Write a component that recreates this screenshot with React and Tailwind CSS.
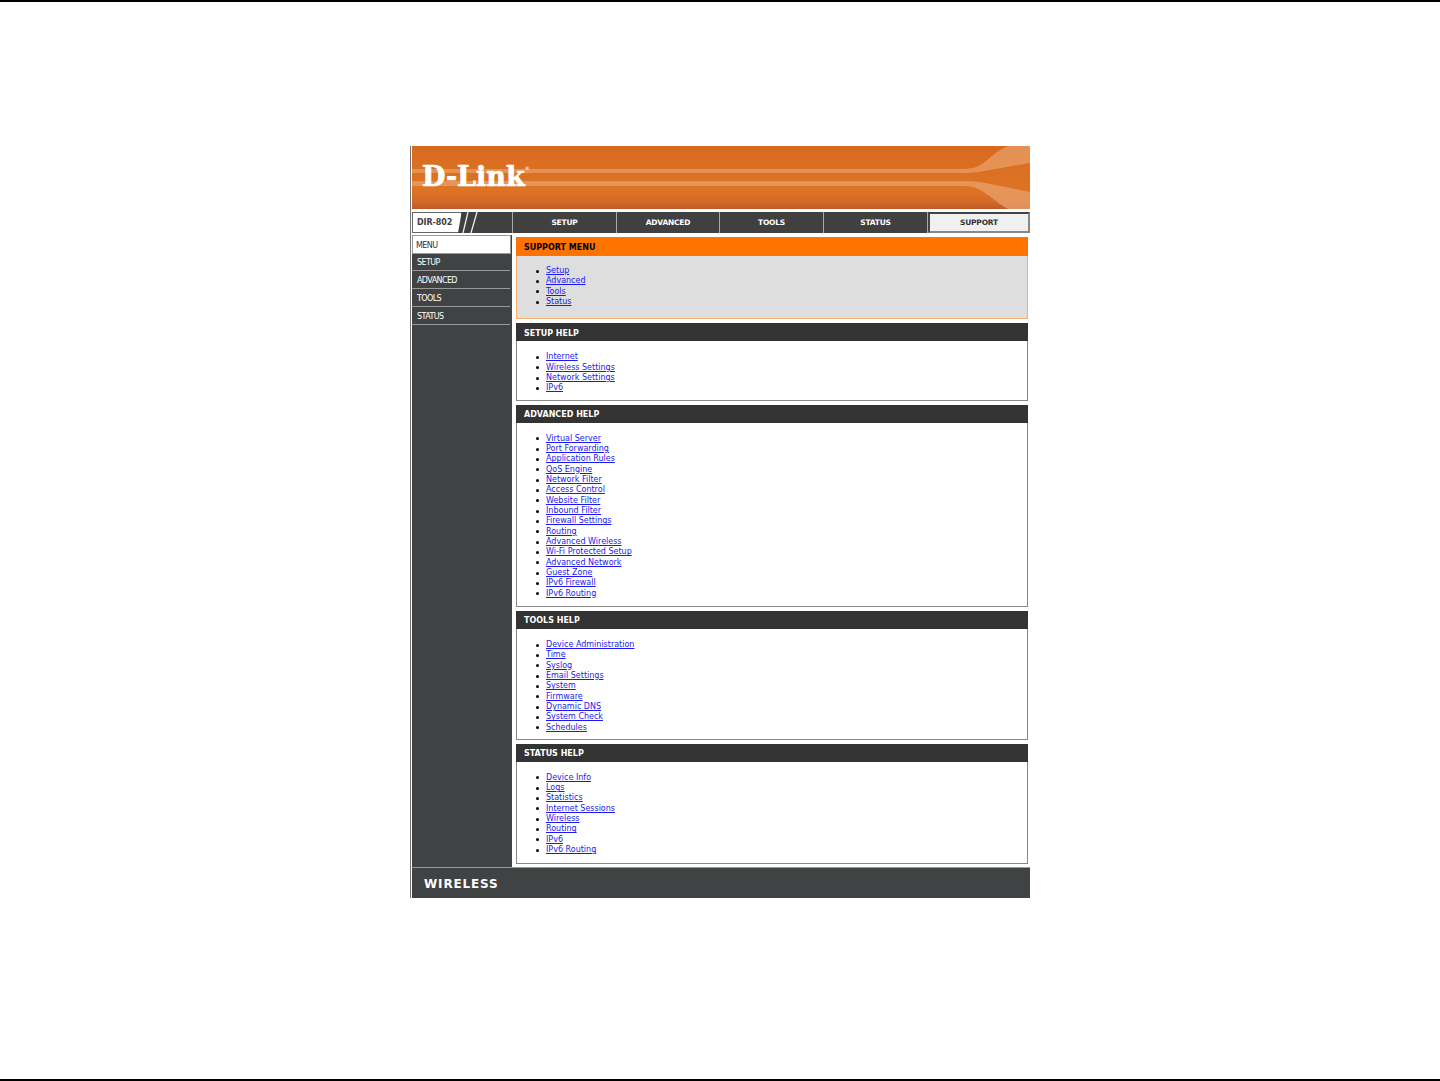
import React from "react";

const FONT = "font-['DejaVu_Sans',sans-serif]";

const sections = [
  {
    title: "SETUP HELP",
    pad: "pb-[6px]",
    links: ["Internet", "Wireless Settings", "Network Settings", "IPv6"],
  },
  {
    title: "ADVANCED HELP",
    pad: "pb-[7px]",
    links: [
      "Virtual Server",
      "Port Forwarding",
      "Application Rules",
      "QoS Engine",
      "Network Filter",
      "Access Control",
      "Website Filter",
      "Inbound Filter",
      "Firewall Settings",
      "Routing",
      "Advanced Wireless",
      "Wi-Fi Protected Setup",
      "Advanced Network",
      "Guest Zone",
      "IPv6 Firewall",
      "IPv6 Routing",
    ],
  },
  {
    title: "TOOLS HELP",
    pad: "pb-[6px]",
    links: [
      "Device Administration",
      "Time",
      "Syslog",
      "Email Settings",
      "System",
      "Firmware",
      "Dynamic DNS",
      "System Check",
      "Schedules",
    ],
  },
  {
    title: "STATUS HELP",
    pad: "pb-2",
    links: [
      "Device Info",
      "Logs",
      "Statistics",
      "Internet Sessions",
      "Wireless",
      "Routing",
      "IPv6",
      "IPv6 Routing",
    ],
  },
];

const BannerArt = () => (
  <svg className="absolute inset-0 h-full w-full" viewBox="0 0 618 63" preserveAspectRatio="none">
    <defs>
      <linearGradient id="bannerBg" x1="0" y1="0" x2="0" y2="1">
        <stop offset="0" stopColor="#d86a20" />
        <stop offset="0.7" stopColor="#dd7423" />
        <stop offset="0.88" stopColor="#d36a26" />
        <stop offset="1" stopColor="#bd5a2a" />
      </linearGradient>
    </defs>
    <rect width="618" height="63" fill="url(#bannerBg)" />
    <path d="M0 23H552C562 23 568 20 574 15C582 8 588 3 596 0H618V17L575 24.5C570 25.5 562 27 552 27H0Z" fill="#e9a16c" opacity="0.7" />
    <path d="M0 35H552C562 35 570 36 578 38L618 46V63H596C590 60 584 55 576 49C568 43 562 40 552 40H0Z" fill="#e9a16c" opacity="0.75" />
  </svg>
);

const NavCell = ({ label, width }) => (
  <div className={`flex h-full items-center justify-center border-r border-[#aaa] text-[7.5px] font-bold tracking-[-0.2px] text-white ${width}`}>
    {label}
  </div>
);

const SideItem = ({ label, height }) => (
  <div className={`mr-[2px] flex items-center border-b border-[#999] pt-[2px] pl-[5px] text-[8px] tracking-[-0.6px] text-white ${height}`}>
    {label}
  </div>
);

const LinkList = ({ links }) => (
  <ul className="pl-[19px] text-[8px] leading-[10.33px]">
    {links.map((l) => (
      <li key={l} className="flex items-center">
        <span className="mr-[7px] h-[3px] w-[3px] rounded-full bg-black" />
        <a href="#" className="text-[#1a1af0] underline">
          {l}
        </a>
      </li>
    ))}
  </ul>
);

const HelpBox = ({ title, links, pad }) => (
  <section className={`border-x border-b border-[#888] bg-white ${pad}`}>
    <h2 className="-mx-px mb-[11px] flex h-[18px] items-center bg-[#333] pt-[3px] pl-2 text-[8px] font-bold text-white">
      {title}
    </h2>
    <LinkList links={links} />
  </section>
);

export default function App() {
  return (
    <div className={`flex min-h-[1081px] flex-col justify-between bg-white ${FONT}`}>
      <div className="border-t-2 border-black pt-[144px] pl-[410px]">
        <div className="w-[620px] border-l border-[#777] pl-px">
          {/* banner */}
          <div className="relative flex h-[63px] items-center overflow-hidden">
            <BannerArt />
            <span className="relative -mt-[2px] ml-[10px] font-['DejaVu_Serif',serif] text-[27px] leading-none font-bold text-white [-webkit-text-stroke:0.7px_white]">
              D-Link
            </span>
            <span className="relative -mt-[18px] text-[5px] text-white">®</span>
          </div>

          {/* nav */}
          <div className="mt-[3px] flex h-[21px] bg-[#404040]">
            <div className="relative flex w-[101px] items-stretch overflow-hidden border-r border-[#aaa]">
              <div className="flex w-[50px] items-center border border-[#666] bg-white pt-px pl-[4px] text-[8px] font-bold tracking-[-0.1px] text-[#404040]">
                DIR-802
              </div>
              <svg className="absolute top-0 left-[46px] h-[21px] w-[24px]" viewBox="0 0 24 21">
                <path d="M3.7 0L0 21H8V0Z" fill="#404040" />
                <path d="M5 21L10 0M13 21L19 0" stroke="#eee" strokeWidth="1.3" fill="none" />
              </svg>
            </div>
            <NavCell label="SETUP" width="w-[104px]" />
            <NavCell label="ADVANCED" width="w-[103px]" />
            <NavCell label="TOOLS" width="w-[104px]" />
            <NavCell label="STATUS" width="w-[104px]" />
            <div className="flex h-full w-[102px] items-center justify-center border-2 border-[#444] border-r-[#888] border-b-[#888] bg-[#f0f0f0] text-[7.5px] font-bold tracking-[-0.2px] text-[#333]">
              SUPPORT
            </div>
          </div>

          {/* body */}
          <div className="mt-[2px] flex h-[632px]">
            <aside className="w-[100px] bg-[#404344]">
              <div className="mr-px flex h-[19px] items-center border border-[#999] bg-white pt-[2px] pl-[3px] text-[8px] tracking-[-0.6px] text-[#333]">
                MENU
              </div>
              <SideItem label="SETUP" height="h-[17px]" />
              <SideItem label="ADVANCED" height="h-[18px]" />
              <SideItem label="TOOLS" height="h-[18px]" />
              <SideItem label="STATUS" height="h-[18px]" />
            </aside>

            <main className="ml-[4px] flex w-[512px] flex-col gap-1 pt-[2px]">
              <section className="border-x border-b border-[#f5b070] bg-[#dedede] pb-[11px]">
                <h2 className="-mx-px mb-[10px] flex h-[19px] items-center bg-[#ff7300] pt-[3px] pl-2 text-[8px] font-bold text-black">
                  SUPPORT MENU
                </h2>
                <LinkList links={["Setup", "Advanced", "Tools", "Status"]} />
              </section>
              {sections.map((s) => (
                <HelpBox key={s.title} title={s.title} links={s.links} pad={s.pad} />
              ))}
            </main>
          </div>

          {/* footer */}
          <div className="flex h-[31px] items-center border-t border-[#999] bg-[#404344] pt-px pl-[12px]">
            <span className="text-[12px] font-bold tracking-[0.85px] text-white">WIRELESS</span>
          </div>
        </div>
      </div>
      <div className="h-[2px] bg-black" />
    </div>
  );
}
